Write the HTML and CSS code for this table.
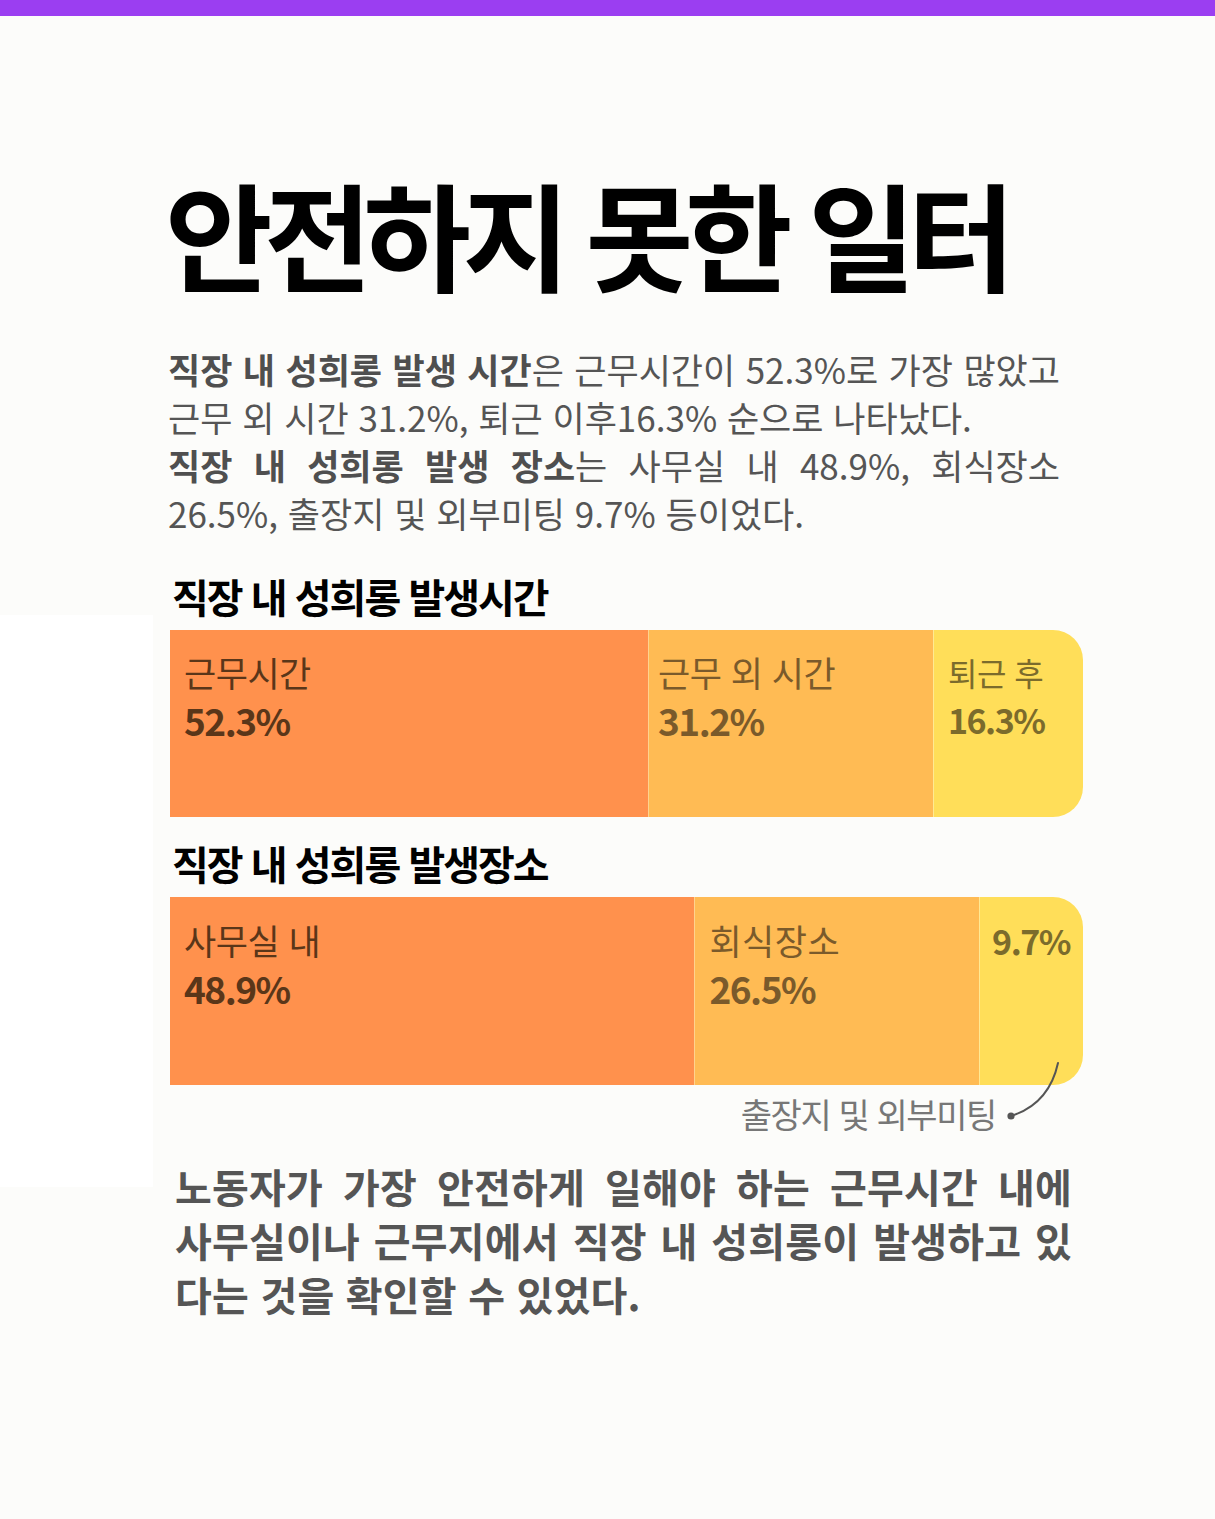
FILE: index.html
```html
<!DOCTYPE html>
<html lang="ko">
<head>
<meta charset="utf-8">
<title>안전하지 못한 일터</title>
<link rel="stylesheet" href="styles.css">
</head>
<body>
<div class="topbar"></div>
<main class="page">
  <h1 class="title">안전하지 못한 일터</h1>
  <div class="intro">
    <p class="para"><span class="jl"><strong>직장 내 성희롱 발생 시간</strong>은 근무시간이 52.3%로 가장 많았고</span><span class="ll">근무 외 시간 31.2%, 퇴근 이후16.3% 순으로 나타났다.</span></p>
    <p class="para"><span class="jl"><strong>직장 내 성희롱 발생 장소</strong>는 사무실 내 48.9%, 회식장소</span><span class="ll">26.5%, 출장지 및 외부미팅 9.7% 등이었다.</span></p>
  </div>

  <h2 class="chart-title first">직장 내 성희롱 발생시간</h2>
  <div class="bar">
    <div class="seg s1" style="width:478px"><span class="name">근무시간</span><span class="pct">52.3%</span></div>
    <div class="seg s2" style="width:285px"><span class="name">근무 외 시간</span><span class="pct">31.2%</span></div>
    <div class="seg s3" style="width:150px"><span class="name">퇴근 후</span><span class="pct">16.3%</span></div>
  </div>

  <h2 class="chart-title second">직장 내 성희롱 발생장소</h2>
  <div class="chart">
    <div class="bar">
      <div class="seg s1" style="width:525px"><span class="name">사무실 내</span><span class="pct">48.9%</span></div>
      <div class="seg s2" style="width:285px"><span class="name">회식장소</span><span class="pct">26.5%</span></div>
      <div class="seg s3" style="width:104px"><span class="pct">9.7%</span></div>
    </div>
    <div class="note"><span class="note-text">출장지 및 외부미팅</span></div>
    <svg class="leader" width="60" height="62" viewBox="0 0 60 62" aria-hidden="true">
      <path d="M8 56 Q 46 44 55 3" fill="none" stroke="#555" stroke-width="2" stroke-linecap="round"/>
      <circle cx="8" cy="56" r="3.6" fill="#555"/>
    </svg>
  </div>

  <p class="summary"><span class="jl">노동자가 가장 안전하게 일해야 하는 근무시간 내에</span><span class="jl">사무실이나 근무지에서 직장 내 성희롱이 발생하고 있</span><span class="ll">다는 것을 확인할 수 있었다.</span></p>
</main>
</body>
</html>
```

FILE: styles.css
```css
html, body {
  margin: 0;
  padding: 0;
}

body {
  width: 1215px;
  min-height: 1519px;
  background:
    linear-gradient(#ffffff, #ffffff) 0 615px / 153px 572px no-repeat,
    #fcfcfa;
  font-family: "Noto Sans CJK KR", "Noto Sans", sans-serif;
  color: #555;
}

.topbar {
  height: 16px;
  background: #9b3ef1;
}

.page {
  display: flex;
  flex-direction: column;
  padding-left: 168px;
  width: 915px;
}

.title {
  margin: 156px 0 0 -3px;
  font-size: 117px;
  line-height: 120px;
  font-weight: 700;
  letter-spacing: -8.5px;
  color: #000;
  white-space: nowrap;
}

.intro {
  margin-top: 53px;
  width: 892px;
}

.para {
  margin: 0;
  font-size: 35px;
  line-height: 48px;
  letter-spacing: 0;
  color: #555;
}

.para strong {
  font-weight: 700;
  color: #4f4f4f;
}

.jl {
  display: block;
  text-align: justify;
  text-align-last: justify;
}

.ll {
  display: block;
}

.chart-title {
  margin: 0 0 10px 4px;
  font-size: 40px;
  line-height: 48px;
  font-weight: 700;
  letter-spacing: -2px;
  color: #000;
}

.chart-title.first {
  margin-top: 35px;
}

.chart-title.second {
  margin-top: 22px;
}

.bar {
  display: flex;
  height: 187px;
  margin-left: 2px;
  border-radius: 0 30px 30px 0;
  overflow: hidden;
}

.chart .bar {
  height: 188px;
}

.seg {
  display: flex;
  flex-direction: column;
  box-sizing: border-box;
  padding: 18px 0 0 14px;
  font-size: 35px;
  line-height: 48px;
}

.seg + .seg {
  border-left: 1px solid rgba(255, 255, 255, 0.35);
}

.name {
  letter-spacing: -0.5px;
}

.pct {
  font-weight: 700;
  font-size: 37px;
  letter-spacing: -1.5px;
}

.s1 { background: #ff914d; color: #5a3619; }
.s2 { background: #ffbb54; color: #7a5a2b; padding-left: 9px; }
.s3 { background: #ffde59; color: #7b6b2c; padding-left: 14px; }

.s3 .name { font-size: 32px; }
.s3 .pct { font-size: 34px; }

.chart .seg { padding-top: 19px; }
.chart .s2 { padding-left: 14px; }
.chart .s2 .name { letter-spacing: 0.5px; }
.chart .s3 { padding-left: 12px; padding-top: 20px; }

.chart {
  position: relative;
}

.note {
  display: flex;
  justify-content: flex-end;
  margin-top: 9px;
  padding-right: 87px;
}

.note-text {
  font-size: 34px;
  line-height: 40px;
  letter-spacing: -1.4px;
  color: #777;
}

.leader {
  position: absolute;
  left: 835px;
  top: 163px;
}

.summary {
  margin: 25px 0 0 7px;
  width: 897px;
  font-size: 40px;
  line-height: 54px;
  font-weight: 700;
  letter-spacing: 0.2px;
  color: #555;
}
```
